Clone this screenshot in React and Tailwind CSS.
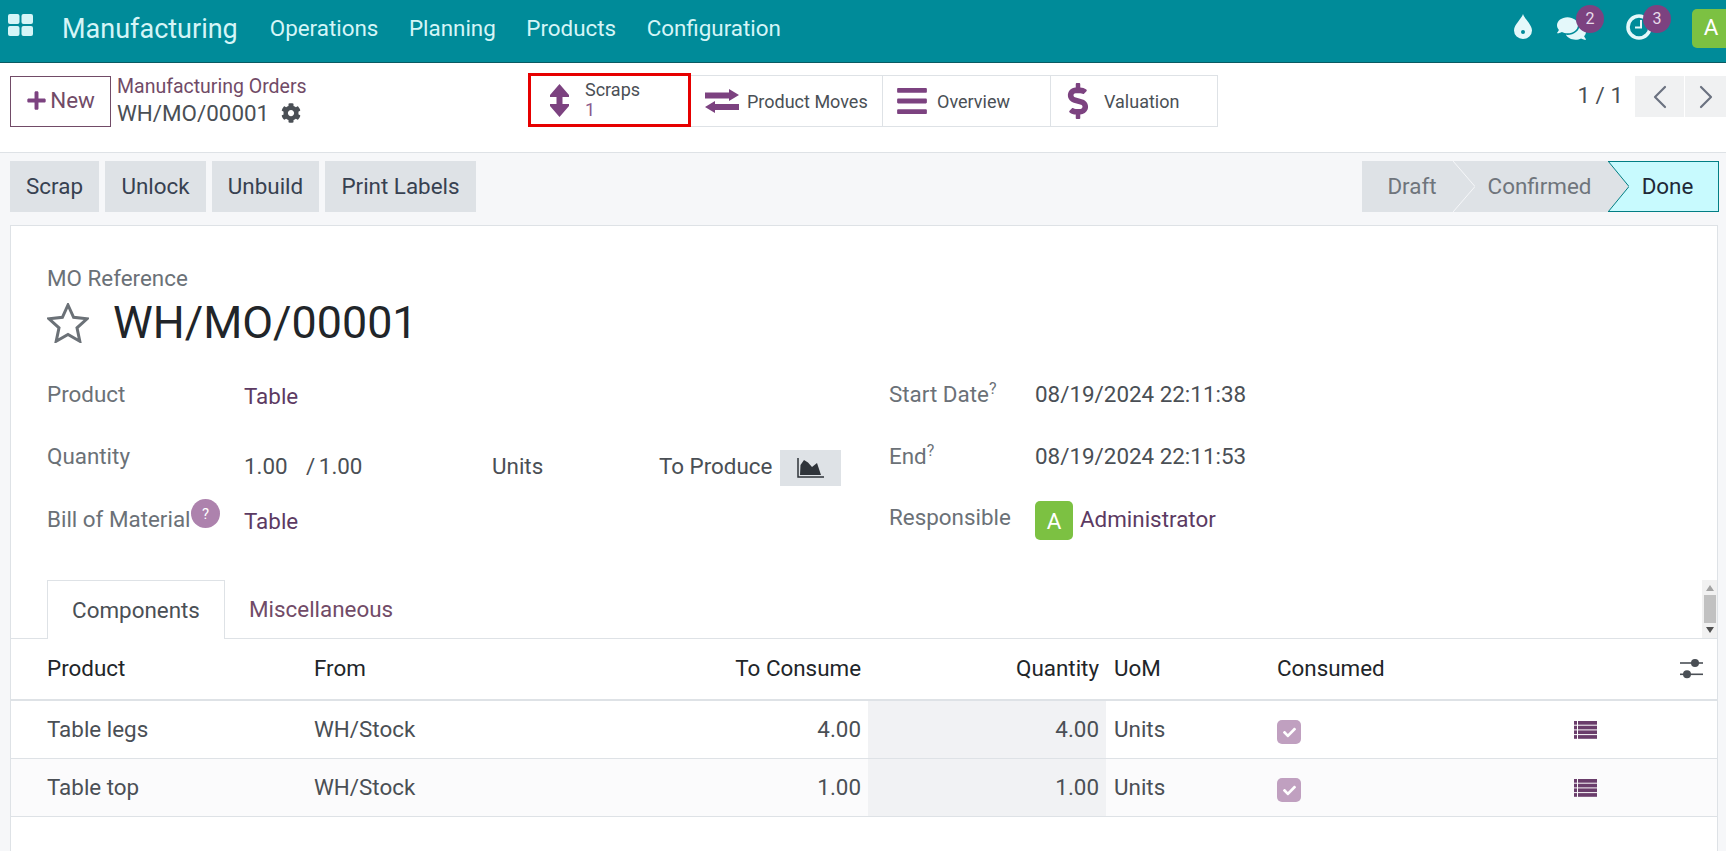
import React from 'react';
import { ChevronLeft, ChevronRight } from 'lucide-react';
import { FaBars, FaDollarSign, FaCog, FaComments, FaPlus, FaCheck } from 'react-icons/fa';

function AppsIcon() {
  return (
    <svg width="25" height="22" viewBox="0 0 25 22" className="fill-[#d5f5f7]">
      <rect x="0" y="0" width="11.5" height="10" rx="2" />
      <rect x="13.5" y="0" width="11.5" height="10" rx="2" />
      <rect x="0" y="12" width="11.5" height="10" rx="2" />
      <rect x="13.5" y="12" width="11.5" height="10" rx="2" />
    </svg>
  );
}

function DropIcon() {
  return (
    <svg width="18" height="25" viewBox="0 0 18 25" className="-translate-y-[5px] fill-[#e4f8fa]">
      <path d="M9 0C10.5 5 18 10.5 18 16.5A9 8.5 0 0 1 0 16.5C0 10.5 7.5 5 9 0Z" />
      <circle cx="9" cy="18" r="2" fill="#008b99" />
    </svg>
  );
}

function ClockIcon() {
  return (
    <svg width="28" height="28" viewBox="0 0 28 28" fill="none" stroke="#e4f8fa">
      <circle cx="14" cy="14" r="11" strokeWidth="3.6" />
      <polyline points="16,7 16,14.5 10,14.5" strokeWidth="2" />
    </svg>
  );
}

function ScrapIcon() {
  return (
    <svg width="19" height="33" viewBox="0 0 19 33" className="fill-[#7c4280]">
      <path d="M9.5 0L19 11V13H12.5V20H19V22L9.5 33L0 22V20H6.5V13H0V11Z" />
    </svg>
  );
}

function MovesIcon() {
  return (
    <svg width="34" height="24" viewBox="0 0 34 24" className="fill-[#7c4280]">
      <path d="M0 3.5H24V0L34 6L24 12V9.5H0Z" />
      <path d="M34 15H10V12L0 18L10 24V21H34Z" />
    </svg>
  );
}

function StarIcon() {
  return (
    <svg width="42" height="40" viewBox="0 0 42 40" fill="none" stroke="#6b7177" strokeWidth="3">
      <polygon points="21,2 26.6,14.3 40,15.8 30,24.9 32.8,38.2 21,31.5 9.2,38.2 12,24.9 2,15.8 15.4,14.3" />
    </svg>
  );
}

function AreaChartIcon() {
  return (
    <svg width="27" height="20" viewBox="0 0 27 20" className="fill-[#2f343a]">
      <path d="M3 17L3.5 7L7 2L11 4.5L15 9L20 5L24 17Z" />
      <path d="M1 0V19H27" fill="none" stroke="#2f343a" strokeWidth="1.5" />
    </svg>
  );
}

function ListIcon() {
  return (
    <svg width="23" height="18" viewBox="0 0 23 18" className="fill-[#6a3d6b]">
      {[0, 4.7, 9.4, 14.1].map((y) => (
        <g key={y}>
          <rect x="0" y={y} width="3" height="3.7" />
          <rect x="4" y={y} width="19" height="3.7" />
        </g>
      ))}
    </svg>
  );
}

function SlidersIcon() {
  return (
    <svg width="24" height="22" viewBox="0 0 24 22" className="fill-[#4a4f55] stroke-[#4a4f55]">
      <line x1="1" y1="5" x2="24" y2="5" strokeWidth="1.6" />
      <circle cx="16" cy="5" r="4" strokeWidth="0" />
      <line x1="1" y1="16.3" x2="24" y2="16.3" strokeWidth="1.6" />
      <circle cx="8" cy="16.3" r="4" strokeWidth="0" />
    </svg>
  );
}

function Badge({ children, className }) {
  return (
    <span
      className={`absolute flex h-[28px] w-[28px] items-center justify-center rounded-full bg-[#7c4280] text-[16px] text-[#e8dcea] ${className}`}
    >
      {children}
    </span>
  );
}

function Navbar() {
  return (
    <nav className="flex h-[63px] shrink-0 items-center border-b border-[#0a5a62] bg-[#008b99] text-[#d5f5f7]">
      <div className="ml-[8px] flex h-[22px] w-[25px] -translate-y-[6px]">
        <AppsIcon />
      </div>
      <div className="ml-[29px] -translate-y-[2px] text-[27px] leading-none">Manufacturing</div>
      <div className="ml-[32px] flex -translate-y-[3px] gap-[30.5px] text-[22.4px] leading-none">
        <span>Operations</span>
        <span>Planning</span>
        <span>Products</span>
        <span>Configuration</span>
      </div>
      <div className="ml-auto flex items-center">
        <DropIcon />
        <div className="relative ml-[25px] -translate-y-[3px]">
          <FaComments className="text-[29px] text-[#e4f8fa]" />
          <Badge className="-right-[18px] -top-[9px]">2</Badge>
        </div>
        <div className="relative ml-[39px] -translate-y-[4px]">
          <ClockIcon />
          <Badge className="-right-[18px] -top-[8px]">3</Badge>
        </div>
        <div className="ml-[39px] -mr-[4px] flex h-[39px] w-[38px] -translate-y-[3px] items-center justify-center rounded-[5px] bg-[#7cc142] text-[22.4px] text-white">
          A
        </div>
      </div>
    </nav>
  );
}

function StatButton({ icon, label, value, width, active }) {
  return (
    <div
      className={
        active
          ? 'flex h-[54px] w-[165px] items-center border-[3px] border-[#e60000] pl-[19px]'
          : `flex h-[52px] items-center border border-l-0 border-[#dee2e6] ${width}`
      }
    >
      {icon}
      {value ? (
        <div className="ml-[16px] text-[18px] leading-[20px] text-[#4a4f55]">
          <div>{label}</div>
          <div className="text-[#8a5a8c]">{value}</div>
        </div>
      ) : (
        <div className="text-[18px] text-[#4a4f55]">{label}</div>
      )}
    </div>
  );
}

function ControlPanel() {
  return (
    <div className="grid h-[90px] shrink-0 grid-cols-[528px_690px_1fr] border-b border-[#dee2e6] bg-white">
      <div className="flex pl-[10px] pt-[13px]">
        <button className="flex h-[51px] w-[101px] items-center justify-center border border-[#714b67] pb-[2px] text-[22.4px] text-[#714b67]">
          <FaPlus className="mr-[3px] text-[21px] text-[#7c4280]" />
          New
        </button>
        <div className="ml-[6px] -mt-[1px]">
          <div className="text-[19.5px] leading-[24px] text-[#714b67]">Manufacturing Orders</div>
          <div className="mt-[1px] flex items-center text-[22.4px] leading-[26px] text-[#4a4f55]">
            WH/MO/00001
            <FaCog className="ml-[12px] text-[20px]" />
          </div>
        </div>
      </div>
      <div className="flex items-start pt-[10px]">
        <StatButton active label="Scraps" value="1" icon={<ScrapIcon />} />
        <div className="mt-[2px] flex">
          <StatButton
            width="w-[192px]"
            label="Product Moves"
            icon={
              <span className="ml-[14px] mr-[8px]">
                <MovesIcon />
              </span>
            }
          />
          <StatButton
            width="w-[168px]"
            label="Overview"
            icon={<FaBars className="ml-[12px] mr-[8px] text-[34px] text-[#7c4280]" />}
          />
          <StatButton
            width="w-[167px]"
            label="Valuation"
            icon={<FaDollarSign className="ml-[9px] mr-[8px] text-[36px] text-[#7c4280]" />}
          />
        </div>
      </div>
      <div className="flex justify-end pt-[13px]">
        <span className="mr-[12px] mt-[6px] text-[22.4px] leading-[26px] text-[#4a4f55]">1 / 1</span>
        <button className="flex h-[41px] w-[49px] items-center justify-center bg-[#f0f1f2] text-[#6b7280]">
          <ChevronLeft size={40} strokeWidth={1.3} />
        </button>
        <button className="ml-[1px] flex h-[41px] w-[41px] items-center justify-center bg-[#f0f1f2] text-[#6b7280]">
          <ChevronRight size={40} strokeWidth={1.3} />
        </button>
      </div>
    </div>
  );
}

function ActionButton({ children, width }) {
  return (
    <button className={`flex h-[51px] items-center justify-center bg-[#dee2e6] text-[22.4px] text-[#374151] ${width}`}>
      {children}
    </button>
  );
}

function StatusBar() {
  return (
    <div className="flex h-[51px] text-[22.4px]">
      <div className="flex w-[91px] items-center justify-center bg-[#dee2e6] pl-[9px] text-[#6f757c]">Draft</div>
      <svg width="22" height="51" viewBox="0 0 22 51" className="bg-[#dee2e6]">
        <polyline points="0,0 22,25.5 0,51" fill="none" stroke="#f6f7f9" strokeWidth="1" />
      </svg>
      <div className="flex w-[133px] items-center justify-center bg-[#dee2e6] pr-[4px] text-[#6f757c]">Confirmed</div>
      <svg width="21" height="51" viewBox="0 0 21 51" className="bg-[#c8fafe]">
        <polygon points="0,0 21,25.5 0,51" fill="#dee2e6" />
        <polyline points="0,0 21,25.5 0,51" fill="none" stroke="#017e84" strokeWidth="1" />
        <line x1="0" y1="0.5" x2="21" y2="0.5" stroke="#017e84" />
        <line x1="0" y1="50.5" x2="21" y2="50.5" stroke="#017e84" />
      </svg>
      <div className="flex w-[90px] items-center justify-center border-y border-r border-[#017e84] bg-[#c8fafe] pr-[12px] text-[#1f2937]">
        Done
      </div>
    </div>
  );
}

function ActionBar() {
  return (
    <div className="flex h-[72px] shrink-0 items-start justify-between bg-[#f6f7f9] pl-[10px] pr-[7px] pt-[8px]">
      <div className="flex gap-[6px]">
        <ActionButton width="w-[89px]">Scrap</ActionButton>
        <ActionButton width="w-[101px]">Unlock</ActionButton>
        <ActionButton width="w-[107px]">Unbuild</ActionButton>
        <ActionButton width="w-[151px]">Print Labels</ActionButton>
      </div>
      <StatusBar />
    </div>
  );
}

function Label({ children, className = '' }) {
  return <div className={`text-[22.4px] leading-[24px] text-[#6b7177] ${className}`}>{children}</div>;
}

function FormHeader() {
  return (
    <div className="px-[36px] pt-[40px]">
      <Label>MO Reference</Label>
      <div className="mt-[5px] flex h-[56px] items-center">
        <StarIcon />
        <h1 className="ml-[24px] text-[44.8px] leading-none text-[#212529]">WH/MO/00001</h1>
      </div>
    </div>
  );
}

function FormFields() {
  return (
    <div className="grid grid-cols-[842px_1fr] pl-[36px] pt-[31px] text-[22.4px] leading-[24px] text-[#4a4f55]">
      <div>
        <div className="flex h-[62px]">
          <Label className="w-[197px]">Product</Label>
          <div className="mt-[2px] text-[#5c3a62]">Table</div>
        </div>
        <div className="flex h-[63px]">
          <Label className="w-[197px]">Quantity</Label>
          <div className="mt-[10px] flex">
            <span className="w-[62px]">1.00</span>
            <span className="w-[186px] [word-spacing:-2px]">/ 1.00</span>
            <span className="w-[167px]">Units</span>
            <span>To Produce</span>
          </div>
          <button className="ml-[8px] mt-[6px] flex h-[36px] w-[61px] items-center justify-center bg-[#dee2e6]">
            <AreaChartIcon />
          </button>
        </div>
        <div className="flex">
          <div className="relative w-[197px]">
            <Label>Bill of Material</Label>
            <span className="absolute -top-[8px] left-[144px] flex h-[29px] w-[29px] items-center justify-center rounded-full bg-[#ad82ad] text-[15px] text-white">
              ?
            </span>
          </div>
          <div className="mt-[2px] text-[#5c3a62]">Table</div>
        </div>
      </div>
      <div>
        <div className="flex h-[62px]">
          <Label className="w-[146px]">
            Start Date<sup className="text-[16px] leading-none">?</sup>
          </Label>
          <div>08/19/2024 22:11:38</div>
        </div>
        <div className="flex h-[61px]">
          <Label className="w-[146px]">
            End<sup className="text-[16px] leading-none">?</sup>
          </Label>
          <div>08/19/2024 22:11:53</div>
        </div>
        <div className="flex">
          <Label className="w-[146px]">Responsible</Label>
          <div className="-mt-[4px] flex items-center">
            <span className="flex h-[39px] w-[38px] items-center justify-center rounded-[5px] bg-[#7cc142] text-white">
              A
            </span>
            <span className="ml-[7px] -translate-y-[2px] text-[#5c3a62]">Administrator</span>
          </div>
        </div>
      </div>
    </div>
  );
}

function Tabs() {
  return (
    <div className="relative mt-[40px] flex h-[59px] shrink-0 border-b border-[#dee2e6] pl-[36px] text-[22.4px]">
      <div className="-mb-[1px] flex h-[59px] w-[178px] items-center justify-center border-x border-t border-[#dee2e6] bg-white pt-[1px] text-[#4a4f55]">
        Components
      </div>
      <div className="ml-[24px] flex items-center pt-[1px] text-[#714b67]">Miscellaneous</div>
      <div className="absolute bottom-0 right-0 flex h-[58px] w-[15px] flex-col items-center bg-[#f1f1f1] pt-[5px]">
        <span className="h-0 w-0 border-x-[4px] border-b-[6px] border-x-transparent border-b-[#a3a3a3]" />
        <span className="mt-[4px] h-[28px] w-[12px] bg-[#c1c1c1]" />
        <span className="mt-[4px] h-0 w-0 border-x-[4px] border-t-[6px] border-x-transparent border-t-[#505050]" />
      </div>
    </div>
  );
}

const rows = [
  { name: 'Table legs', toConsume: '4.00', qty: '4.00' },
  { name: 'Table top', toConsume: '1.00', qty: '1.00', striped: true },
];

const gridCols = 'grid grid-cols-[293px_250px_314px_238px_161px_297px_1fr]';

function ComponentsTable() {
  return (
    <div className="text-[22.4px] text-[#4a4f55]">
      <div className={`${gridCols} h-[62px] items-center border-b-2 border-[#dee2e6] text-[#212529]`}>
        <div className="pl-[36px]">Product</div>
        <div className="pl-[10px]">From</div>
        <div className="pr-[7px] text-right">To Consume</div>
        <div className="pr-[7px] text-right">Quantity</div>
        <div className="pl-[8px]">UoM</div>
        <div className="pl-[10px]">Consumed</div>
        <div className="flex justify-end pr-[14px]">
          <SlidersIcon />
        </div>
      </div>
      {rows.map((row) => (
        <div
          key={row.name}
          className={`${gridCols} h-[58px] items-stretch border-b border-[#dee2e6] ${row.striped ? 'bg-[#fbfbfc]' : 'bg-white'}`}
        >
          <div className="flex items-center pl-[36px]">{row.name}</div>
          <div className="flex items-center pl-[10px]">WH/Stock</div>
          <div className="flex items-center justify-end pr-[7px]">{row.toConsume}</div>
          <div className="flex items-center justify-end bg-[#f1f2f4] pr-[7px]">{row.qty}</div>
          <div className="flex items-center pl-[8px]">Units</div>
          <div className="flex items-center pl-[10px] pt-[5px]">
            <span className="flex h-[24px] w-[24px] items-center justify-center rounded-[5px] bg-[#c0a0c0]">
              <FaCheck className="text-[13px] text-white" />
            </span>
          </div>
          <div className="flex items-center pl-[10px]">
            <ListIcon />
          </div>
        </div>
      ))}
    </div>
  );
}

export default function App() {
  return (
    <div className="flex h-[851px] w-[1726px] flex-col overflow-hidden bg-[#f6f7f9] font-[family-name:Roboto,sans-serif]">
      <Navbar />
      <ControlPanel />
      <ActionBar />
      <main className="ml-[10px] mr-[8px] flex-1 border border-b-0 border-[#dee2e6] bg-white">
        <FormHeader />
        <FormFields />
        <Tabs />
        <ComponentsTable />
      </main>
    </div>
  );
}
